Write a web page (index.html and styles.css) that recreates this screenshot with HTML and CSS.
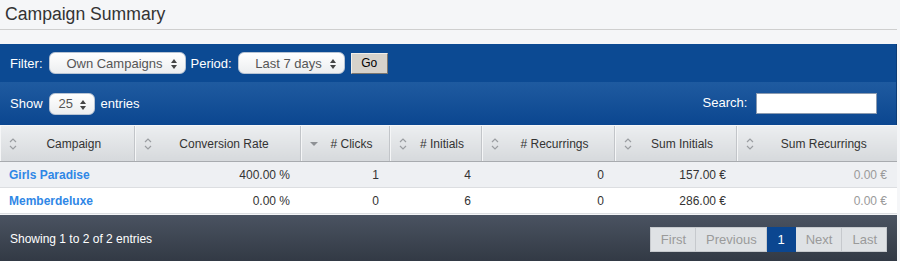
FILE: index.html
```html
<!DOCTYPE html>
<html lang="en">
<head>
    <meta charset="UTF-8">
    <title>Campaign Summary</title>
    <link rel="stylesheet" href="styles.css">
</head>
<body>
    <div class="page">
        <h1 class="title">Campaign Summary</h1>
        <div class="panel">
            <form class="filter-bar">
                <label>Filter:</label>
                <span class="select sel-filter">Own Campaigns<i class="arrows"></i></span>
                <label>Period:</label>
                <span class="select sel-period">Last 7 days<i class="arrows"></i></span>
                <button type="button" class="go">Go</button>
            </form>
            <div class="length-bar">
                <div class="length">Show <span class="select sel-len">25<i class="arrows"></i></span> entries</div>
                <div class="search">Search: <input type="text"></div>
            </div>
        </div>
        <table class="grid">
            <colgroup>
                <col style="width:134px">
                <col style="width:166px">
                <col style="width:89px">
                <col style="width:92px">
                <col style="width:133px">
                <col style="width:122px">
                <col>
            </colgroup>
            <thead>
                <tr>
                    <th><svg class="sort" viewBox="0 0 8 14"><path d="M1 5 L4 2 L7 5 M1 9 L4 12 L7 9"/></svg>Campaign</th>
                    <th><svg class="sort" viewBox="0 0 8 14"><path d="M1 5 L4 2 L7 5 M1 9 L4 12 L7 9"/></svg>Conversion Rate</th>
                    <th><svg class="sort desc" viewBox="0 0 8 14"><path d="M0 5 L8 5 L4 9 Z"/></svg># Clicks</th>
                    <th><svg class="sort" viewBox="0 0 8 14"><path d="M1 5 L4 2 L7 5 M1 9 L4 12 L7 9"/></svg># Initials</th>
                    <th><svg class="sort" viewBox="0 0 8 14"><path d="M1 5 L4 2 L7 5 M1 9 L4 12 L7 9"/></svg># Recurrings</th>
                    <th><svg class="sort" viewBox="0 0 8 14"><path d="M1 5 L4 2 L7 5 M1 9 L4 12 L7 9"/></svg>Sum Initials</th>
                    <th><svg class="sort" viewBox="0 0 8 14"><path d="M1 5 L4 2 L7 5 M1 9 L4 12 L7 9"/></svg>Sum Recurrings</th>
                </tr>
            </thead>
            <tbody>
                <tr class="odd">
                    <td class="name"><a href="#">Girls Paradise</a></td>
                    <td>400.00 %</td>
                    <td>1</td>
                    <td>4</td>
                    <td>0</td>
                    <td>157.00 €</td>
                    <td class="muted">0.00 €</td>
                </tr>
                <tr>
                    <td class="name"><a href="#">Memberdeluxe</a></td>
                    <td>0.00 %</td>
                    <td>0</td>
                    <td>6</td>
                    <td>0</td>
                    <td>286.00 €</td>
                    <td class="muted">0.00 €</td>
                </tr>
            </tbody>
        </table>
        <div class="footer">
            <div class="info">Showing 1 to 2 of 2 entries</div>
            <div class="paging">
                <span class="pg">First</span>
                <span class="pg">Previous</span>
                <span class="pg active">1</span>
                <span class="pg">Next</span>
                <span class="pg">Last</span>
            </div>
        </div>
    </div>
</body>
</html>
```

FILE: styles.css
```css
body {
    margin: 0;
    background-color: #f5f6f8;
    font-family: Arial, "Liberation Sans", sans-serif;
    font-size: 12px;
    color: #333;
}
.page {
    width: 897px;
}
.title {
    margin: 0;
    height: 30px;
    padding: 4px 0 0 5px;
    box-sizing: border-box;
    font-size: 17.6px;
    font-weight: normal;
    color: #333;
    border-bottom: 1px solid #cfcfcf;
}
.panel {
    margin-top: 14px;
    color: #fff;
    font-size: 13px;
    border-right: 1px solid #0a3c78;
}
.filter-bar {
    display: flex;
    align-items: center;
    height: 38px;
    padding: 0 0 0 10px;
    background-color: #0c4a93;
    gap: 5px;
}
.select {
    position: relative;
    display: inline-flex;
    align-items: center;
    justify-content: flex-end;
    box-sizing: border-box;
    height: 22px;
    padding: 0 22px 0 8px;
    border-radius: 6px;
    background: linear-gradient(#ffffff, #eceef0);
    border: 1px solid #b8c4d4;
    color: #555;
    font-size: 13px;
}
.arrows::before, .arrows::after {
    content: "";
    position: absolute;
    right: 8px;
    border-left: 3px solid transparent;
    border-right: 3px solid transparent;
}
.arrows::before {
    top: 6px;
    border-bottom: 4px solid #444;
}
.arrows::after {
    top: 12px;
    border-top: 4px solid #444;
}
.sel-filter {
    width: 137px;
    margin-left: 1px;
}
.sel-period {
    width: 107px;
    margin-left: 1px;
}
.go {
    width: 37px;
    height: 21px;
    padding: 0;
    margin-left: 1px;
    background-color: #d6d2cb;
    border: 1px solid #f0eee9;
    border-right-color: #7a7670;
    border-bottom-color: #7a7670;
    font-family: inherit;
    font-size: 12px;
    color: #000;
}
.length-bar {
    display: flex;
    align-items: center;
    justify-content: space-between;
    height: 43px;
    padding: 0 19px 0 10px;
    background: linear-gradient(#1f5ba0, #0b4690);
}
.length {
    display: flex;
    align-items: center;
    gap: 6px;
}
.sel-len {
    width: 46px;
    justify-content: flex-start;
    padding-left: 9px;
    font-size: 13px;
}
.search input {
    width: 121px;
    height: 21px;
    box-sizing: border-box;
    margin-left: 5px;
    border: 1px solid #8a9ab0;
    vertical-align: middle;
}
.grid {
    width: 100%;
    table-layout: fixed;
    border-collapse: collapse;
    margin-top: 1px;
}
.grid th {
    position: relative;
    height: 35px;
    padding: 0 10px 0 24px;
    font-weight: normal;
    color: #333;
    background: linear-gradient(#eceef0, #d6d9dc);
    border-left: 1px solid #c2c5c9;
    border-bottom: 1px solid #a8abaf;
    box-shadow: inset 1px 0 0 #f5f6f7;
    text-align: center;
}
.grid th:first-child {
    border-left: none;
}
.sort {
    position: absolute;
    left: 9px;
    top: 11px;
    width: 8px;
    height: 14px;
    fill: none;
    stroke: #9a9da1;
    stroke-width: 1.2;
}
.sort.desc {
    fill: #8e9195;
    stroke: none;
}
.grid td {
    height: 25px;
    padding: 0 10px;
    text-align: right;
    background-color: #fff;
    border-bottom: 1px solid #dcdee1;
}
.grid tr.odd td {
    background-color: #eef0f3;
}
.grid td.name {
    text-align: left;
    padding-left: 9px;
}
.grid td.name a {
    color: #2f87e6;
    font-weight: bold;
    text-decoration: none;
}
.grid td.muted {
    color: #9a9a9a;
}
.footer {
    display: flex;
    align-items: center;
    justify-content: space-between;
    height: 47px;
    padding: 0 10px;
    margin-top: 1px;
    background: linear-gradient(#4a5361, #323944);
    color: #fff;
}
.paging {
    display: flex;
    margin-top: 1px;
}
.pg {
    display: inline-flex;
    align-items: center;
    justify-content: center;
    height: 25px;
    box-sizing: border-box;
    padding: 0 9px 0 10px;
    background-color: #dfe2e5;
    border: 1px solid #c6c9cd;
    border-left: none;
    color: #9a9a9a;
    font-size: 13px;
}
.pg:first-child {
    border-left: 1px solid #c6c9cd;
}
.pg.active {
    background-color: #0b4690;
    color: #fff;
    border-color: #0b4690;
    width: 29px;
}
```
